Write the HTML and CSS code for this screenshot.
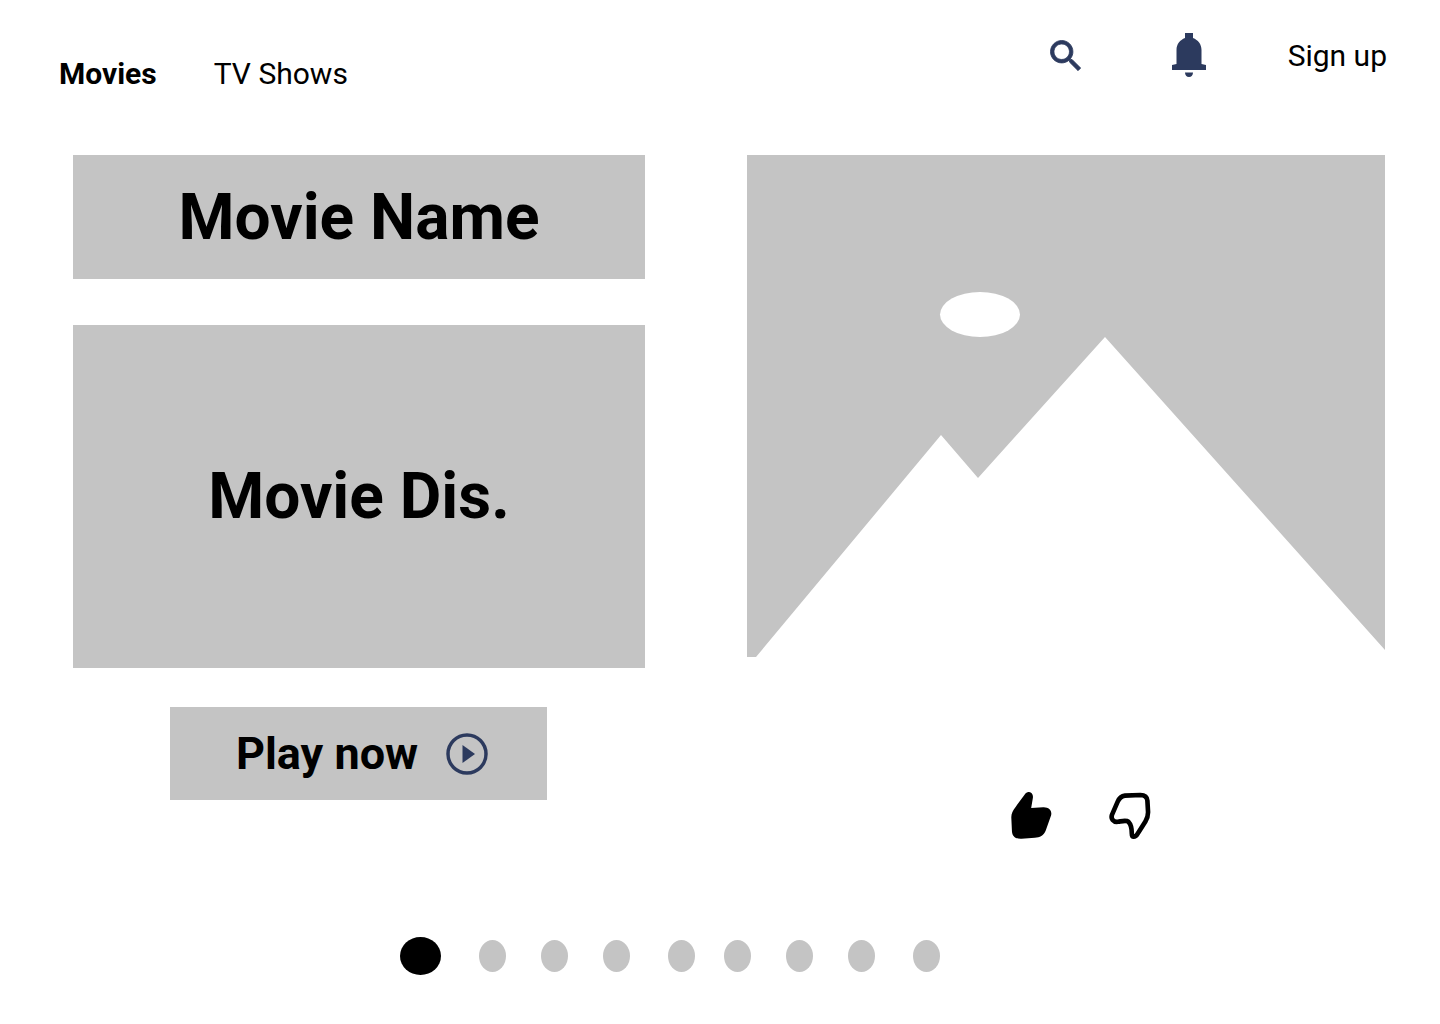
FILE: index.html
```html
<!DOCTYPE html>
<html>
    <head>
        <title>Movies</title>
        <link rel="stylesheet" href="styles.css">
    </head>
    <body>
        <header class="topbar">
            <nav class="nav-links">
                <a class="nav-link nav-active">Movies</a>
                <a class="nav-link">TV Shows</a>
            </nav>
            <div class="nav-tools">
                <svg class="icon-search" viewBox="2.700 2.700 18 18">
                    <path d="M15.500 14h-.79l-.28-.27C15.410 12.590 16 11.110 16 9.500 16 5.910 13.090 3 9.500 3S3 5.910 3 9.500 5.910 16 9.500 16c1.610 0 3.090-.59 4.230-1.570l.27.28v.79l5 4.990L20.490 19l-4.990-5zm-6 0C7.010 14 5 11.990 5 9.500S7.010 5 9.500 5 14 7.010 14 9.500 11.990 14 9.500 14z"/>
                </svg>
                <svg class="icon-bell" viewBox="0 0 34 44">
                    <path d="M13 0h8v5c5 2 8.500 6 8.500 12v14l4.500 1v5H0v-5l4.500-1V17c0-6 3.500-10 8.500-12z"/>
                    <path d="M13 39.500h8c0 2.500-1.500 4.500-4 4.500s-4-2-4-4.500z"/>
                </svg>
                <a class="signup">Sign up</a>
            </div>
        </header>

        <main class="content">
            <section class="info">
                <div class="box name-box">Movie Name</div>
                <div class="box desc-box">Movie Dis.</div>
                <button class="play-btn">
                    <span>Play now</span>
                    <svg class="icon-play" viewBox="0 0 42 42">
                        <circle cx="21" cy="21" r="19" fill="none" stroke="#2c3a5e" stroke-width="3.500"/>
                        <path d="M16.500 12 29 21 16.500 30z" fill="#2c3a5e"/>
                    </svg>
                </button>
            </section>
            <section class="poster">
                <svg class="poster-img" viewBox="0 0 638 502">
                    <path fill="#c4c4c4" d="M0 0H638V495L358 182 231 323 194 280 9 502H0z"/>
                    <ellipse cx="233" cy="159.500" rx="40" ry="22.500" fill="#fff"/>
                </svg>
                <div class="votes">
                    <svg class="thumb" viewBox="55 40 140 160">
                        <path d="M118 49C126 50 131 57 129 68L124 97 160 95C178 94 188 106 184 120L168 165C162 180 150 186 135 187L95 190C76 191 67 182 66 168L64 125C64 113 69 105 77 94L104 57C108 51 113 48 118 49z"/>
                    </svg>
                    <svg class="thumb" viewBox="350 40 140 160">
                        <path class="thumb-line" d="M403 60 450 58C464 58 470 64 471 75L473 110C473 122 470 130 465 138L441 176C434 187 424 187 424 175 424 163 422 147 414 139 407 133 395 137 382 139 368 141 360 130 364 118L381 79C386 67 392 61 403 60z"/>
                    </svg>
                </div>
            </section>
        </main>

        <div class="dots">
            <span class="dot dot-active"></span>
            <span class="dot"></span>
            <span class="dot"></span>
            <span class="dot dot-wide"></span>
            <span class="dot dot-narrow"></span>
            <span class="dot"></span>
            <span class="dot"></span>
            <span class="dot dot-wide"></span>
            <span class="dot"></span>
        </div>
    </body>
</html>
```

FILE: styles.css
```css
body {
  margin: 0;
  background-color: white;
  color: black;
  font-family: Roboto, sans-serif;
}

/*top bar*/
.topbar {
  display: flex;
  justify-content: space-between;
  height: 155px;
  padding: 0 53px 0 59px;
}
.nav-links {
  display: flex;
  gap: 57px;
  padding-top: 56px;
}
.nav-link {
  font-size: 30px;
  line-height: 36px;
}
.nav-active {
  font-weight: 700;
}
.nav-tools {
  display: flex;
  align-items: flex-start;
}
.icon-search {
  width: 31px;
  height: 31px;
  margin-top: 40px;
  fill: #2c3a5e;
  stroke: #2c3a5e;
  stroke-width: 0.5;
}
.icon-bell {
  width: 34px;
  height: 44px;
  margin-top: 33px;
  margin-left: 91px;
  fill: #2c3a5e;
}
.signup {
  margin-top: 38px;
  margin-left: 82px;
  font-size: 30px;
  line-height: 36px;
}

/*main columns*/
.content {
  display: grid;
  grid-template-columns: 572px 638px;
  column-gap: 102px;
  margin-left: 73px;
}
.info {
  display: flex;
  flex-direction: column;
}
.box {
  display: flex;
  align-items: center;
  justify-content: center;
  background-color: #c4c4c4;
  font-size: 64px;
  font-weight: 700;
}
.name-box {
  height: 124px;
}
.desc-box {
  height: 343px;
  margin-top: 46px;
}
.play-btn {
  display: flex;
  align-items: center;
  justify-content: center;
  gap: 28px;
  width: 377px;
  height: 93px;
  margin-top: 39px;
  margin-left: 97px;
  padding: 0 0 0 7px;
  border: none;
  background-color: #c4c4c4;
  color: black;
  font-family: inherit;
  font-size: 45px;
  font-weight: 700;
}
.icon-play {
  width: 42px;
  height: 42px;
}
.poster-img {
  display: block;
  width: 638px;
  height: 502px;
}
.votes {
  display: flex;
  gap: 52px;
  margin-top: 132px;
  margin-left: 261px;
}
.thumb {
  width: 47px;
  height: 53px;
}
.thumb-line {
  fill: none;
  stroke: black;
  stroke-width: 14;
  stroke-linejoin: round;
}

/*pager*/
.dots {
  display: flex;
  align-items: center;
  gap: 35px;
  margin-top: 95px;
  margin-left: 400px;
}
.dot {
  width: 27px;
  height: 32px;
  border-radius: 50%;
  background-color: #c4c4c4;
}
.dot-active {
  width: 41px;
  height: 38px;
  margin-right: 3px;
  background-color: black;
}
.dot-wide {
  margin-right: 3px;
}
.dot-narrow {
  margin-right: -6px;
}
```
